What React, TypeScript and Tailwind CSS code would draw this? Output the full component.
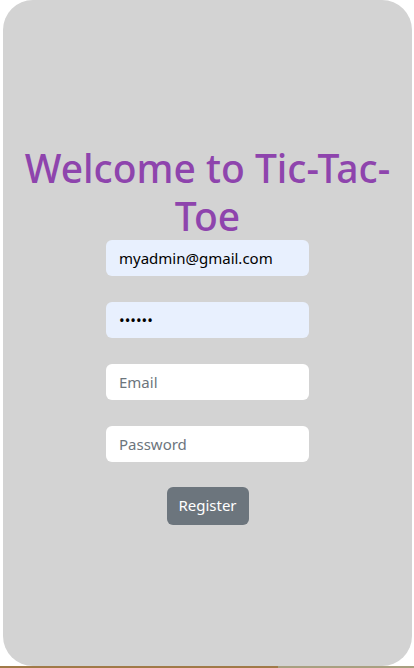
export default function App() {
    return (
        <div className="relative h-[668px] w-[414px] overflow-hidden bg-white" style={{ fontFamily: '"Noto Sans", "Open Sans", sans-serif' }}>
            <div className="ml-[3px] flex h-[666px] w-[409px] flex-col items-center justify-center rounded-[30px] bg-[#d3d3d3] pt-[2px]">
                <h1 className="px-4 text-center text-[39px] font-medium leading-[48px] text-[#8e44ad]">
                    Welcome to Tic-Tac-Toe
                </h1>
                <form className="flex flex-col items-center gap-[26px]" onSubmit={(e) => e.preventDefault()}>
                    <input
                        type="email"
                        defaultValue="myadmin@gmail.com"
                        className="h-[36px] w-[203px] rounded-[6px] bg-[#e8f0fe] px-[13px] text-[15px] text-black outline-none"
                    />
                    <input
                        type="password"
                        defaultValue="123456"
                        className="h-[36px] w-[203px] rounded-[6px] bg-[#e8f0fe] px-[13px] text-[15px] text-black outline-none"
                    />
                    <input
                        type="email"
                        placeholder="Email"
                        className="h-[36px] w-[203px] rounded-[6px] bg-white px-[13px] text-[15px] text-black outline-none placeholder:text-[#6c757d]"
                    />
                    <input
                        type="password"
                        placeholder="Password"
                        className="h-[36px] w-[203px] rounded-[6px] bg-white px-[13px] text-[15px] text-black outline-none placeholder:text-[#6c757d]"
                    />
                    <button
                        type="submit"
                        className="-mt-[1px] h-[38px] w-[82px] rounded-[6px] bg-[#6c757d] text-[15px] text-white"
                    >
                        Register
                    </button>
                </form>
            </div>
            <div className="flex h-[2px] w-full">
                <div className="h-full w-[278px] bg-[#a07a48]" />
                <div className="h-full flex-1 bg-[#a8a080]" />
            </div>
        </div>
    );
}
